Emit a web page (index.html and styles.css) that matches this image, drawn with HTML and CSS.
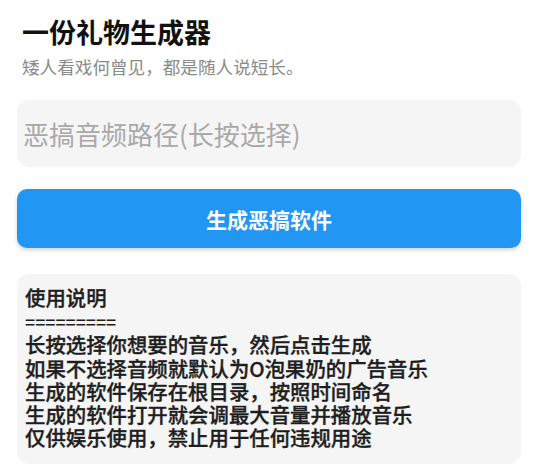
FILE: index.html
```html
<!DOCTYPE html>
<html lang="zh-CN">
  <head>
    <meta charset="UTF-8" />
    <meta name="viewport" content="width=device-width, initial-scale=1.0" />
    <title>一份礼物生成器</title>
    <link rel="stylesheet" href="styles.css">
  </head>
  <body>
    <div class="header">
      <h1 class="title">一份礼物生成器</h1>
      <p class="subtitle">矮人看戏何曾见，都是随人说短长。</p>
    </div>

    <input class="path-input" type="text" placeholder="恶搞音频路径(长按选择)" />

    <button class="make-button">生成恶搞软件</button>

    <div class="notes">
      <pre class="notes-text">使用说明
<span class="rule">=========</span>
长按选择你想要的音乐，然后点击生成
如果不选择音频就默认为O泡果奶的广告音乐
生成的软件保存在根目录，按照时间命名
生成的软件打开就会调最大音量并播放音乐
仅供娱乐使用，禁止用于任何违规用途</pre>
    </div>
  </body>
</html>
```

FILE: styles.css
```css
/* Global Styles */
body {
  font-family: "Noto Sans CJK SC", "Noto Sans", sans-serif;
  background: #fff;
  color: #111;
  margin: 0;
  padding: 0 18px 0 17px;
  display: flex;
  flex-direction: column;
}

.header {
  padding: 15px 0 0 5px;
}

.title {
  margin: 0;
  font-size: 27px;
  line-height: 34px;
  font-weight: 700;
  color: #111;
}

.subtitle {
  margin: 7px 0 0;
  font-size: 17.6px;
  line-height: 22px;
  color: #8a8a8a;
}

.path-input {
  margin-top: 22px;
  height: 67px;
  box-sizing: border-box;
  padding: 0 6px;
  border: none;
  border-radius: 12px;
  background-color: #f5f5f5;
  font-family: inherit;
  font-size: 26px;
  color: #333;
  outline: none;
}

.path-input::placeholder {
  color: #a9a9a9;
}

.make-button {
  margin-top: 22px;
  height: 59px;
  border: none;
  border-radius: 10px;
  background-color: #2196f3;
  color: #fff;
  font-family: inherit;
  font-size: 21px;
  font-weight: 700;
  box-shadow: 0 2px 4px rgba(0, 0, 0, 0.18);
  cursor: pointer;
}

.notes {
  margin-top: 26px;
  padding: 12px 8px 15px;
  border-radius: 12px;
  background-color: #f5f5f5;
}

.notes-text {
  margin: 0;
  font-family: "Noto Sans CJK SC Medium", "Noto Sans CJK SC", sans-serif;
  font-size: 20.4px;
  line-height: 23.2px;
  font-weight: 500;
  color: #1e1e1e;
  white-space: pre;
  -webkit-text-stroke: 0.35px #1e1e1e;
}

.rule {
  font-size: 17.8px;
  font-weight: 400;
  -webkit-text-stroke: 0;
}
```
